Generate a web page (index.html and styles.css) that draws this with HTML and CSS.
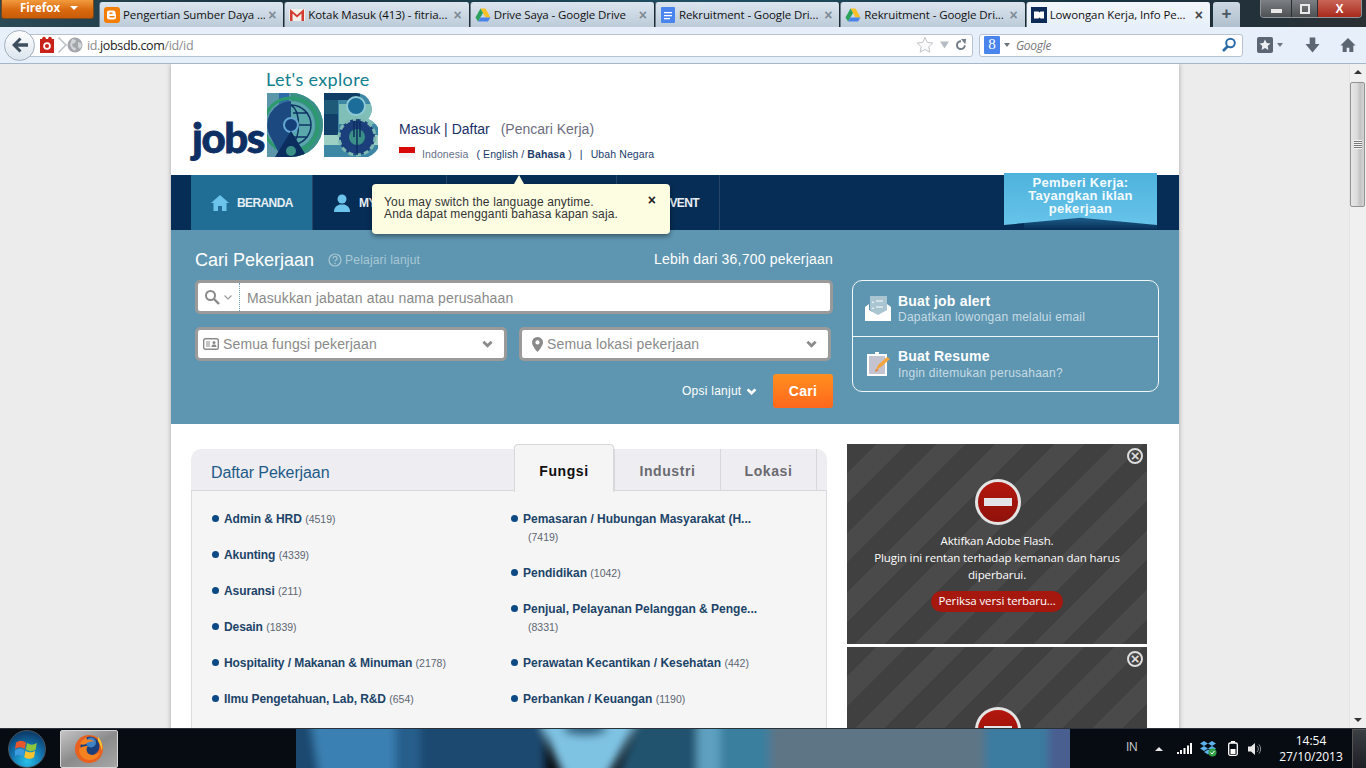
FILE: index.html
```html
<!DOCTYPE html>
<html lang="id">
<head>
  <meta charset="UTF-8" />
  <title>Lowongan Kerja, Info Pekerjaan - JobsDB</title>
  <link rel="stylesheet" href="styles.css">
</head>
<body>
<div class="window">

  <!-- tab strip -->
  <div class="titlebar">
    <div class="ff-button">Firefox <span class="ff-caret"></span></div>
    <div class="tabs">
      <div class="tab">
        <svg class="favicon" viewBox="0 0 16 16"><rect width="16" height="16" rx="3" fill="#f57d00"/><path d="M5 3.5h4A2.5 2.5 0 0 1 11.500 6v1l.5.5V10a2.500 2.500 0 0 1-2.500 2.500h-4A2.500 2.500 0 0 1 3 10V5.500a2 2 0 0 1 2-2z" fill="#fff"/><rect x="5.500" y="5.500" width="3" height="1.400" fill="#f57d00"/><rect x="5.500" y="9" width="5" height="1.400" fill="#f57d00"/></svg>
        <span class="tab-label">Pengertian Sumber Daya ...</span><span class="tab-x">×</span>
      </div>
      <div class="tab">
        <svg class="favicon" viewBox="0 0 16 16"><rect y="2" width="16" height="12" fill="#f2efe8"/><path d="M1 14V2l7 6 7-6v12h-2.500V6.500L8 10.500 3.500 6.500V14z" fill="#d13b30"/></svg>
        <span class="tab-label">Kotak Masuk (413) - fitria...</span><span class="tab-x">×</span>
      </div>
      <div class="tab">
        <svg class="favicon" viewBox="0 0 16 16"><path d="M5.500 1.500h5l5 9h-5z" fill="#f6c026"/><path d="M5.500 1.500L8 6l-5 8.500-2.500-4z" fill="#2aa25b"/><path d="M3 14.500l2.500-4h10l-2.500 4z" fill="#4a83e8"/></svg>
        <span class="tab-label">Drive Saya - Google Drive</span><span class="tab-x">×</span>
      </div>
      <div class="tab">
        <svg class="favicon" viewBox="0 0 16 16"><rect x="1" width="14" height="16" rx="1" fill="#4a85ee"/><path d="M4 5h8v1.200H4zM4 8h8v1.200H4zM4 11h6v1.200H4z" fill="#fff"/></svg>
        <span class="tab-label">Rekruitment - Google Dri...</span><span class="tab-x">×</span>
      </div>
      <div class="tab">
        <svg class="favicon" viewBox="0 0 16 16"><path d="M5.500 1.500h5l5 9h-5z" fill="#f6c026"/><path d="M5.500 1.500L8 6l-5 8.500-2.500-4z" fill="#2aa25b"/><path d="M3 14.500l2.500-4h10l-2.500 4z" fill="#4a83e8"/></svg>
        <span class="tab-label">Rekruitment - Google Dri...</span><span class="tab-x">×</span>
      </div>
      <div class="tab tab-active">
        <svg class="favicon" viewBox="0 0 16 16"><rect width="16" height="16" fill="#0c2b58"/><path d="M3 4.500h4.500l1 1 1-1H13v7H9.500l-1-1-1 1H3z" fill="#fff"/></svg>
        <span class="tab-label">Lowongan Kerja, Info Pe...</span><span class="tab-x">×</span>
      </div>
      <div class="tab-new">+</div>
    </div>
    <div class="win-controls">
      <div class="win-btn win-min"><span></span></div>
      <div class="win-btn win-max"><span></span></div>
      <div class="win-btn win-close">X</div>
    </div>
  </div>

  <!-- navigation toolbar -->
  <div class="toolbar">
    <div class="back-btn">
      <svg width="20" height="20" viewBox="0 0 20 20"><path d="M9.500 2.500L2 10l7.500 7.500 2-2-3.700-3.800H18V8.300H7.800l3.700-3.800z" fill="#3f4e5e"/></svg>
    </div>
    <div class="urlbar">
      <svg class="addon" width="16" height="18" viewBox="0 0 16 18"><rect x="1" y="3" width="14" height="14" fill="#c9221b"/><circle cx="5" cy="2.500" r="1.800" fill="#c9221b"/><circle cx="11" cy="2.500" r="1.800" fill="#c9221b"/><circle cx="8" cy="10" r="3.800" fill="#fff"/><circle cx="8" cy="10" r="2" fill="#c9221b"/></svg>
      <span class="url-sep"></span>
      <svg class="globe" width="16" height="16" viewBox="0 0 16 16"><circle cx="8" cy="8" r="7.500" fill="#a3a7ac"/><path d="M5 2l4 1-1 3-3 1 1 3 3 1-1 3-3-2-2-4zM11 5l3 1 1 3-2 3-2-2z" fill="#d3d6d9"/></svg>
      <span class="url"><span class="url-dim">id.</span>jobsdb.com<span class="url-dim">/id/id</span></span>
      <span class="url-tools">
        <svg width="18" height="18" viewBox="0 0 20 20"><path d="M10 1.500l2.600 5.600 6 .7-4.400 4.100 1.200 6L10 15l-5.400 2.900 1.200-6L1.400 7.800l6-.7z" fill="#fbfbfb" stroke="#b9bdc2"/></svg>
        <svg width="9" height="8" viewBox="0 0 10 8"><path d="M0 0h10L5 8z" fill="#b6bcc3"/></svg>
        <svg width="12" height="14" viewBox="0 0 14 14"><path d="M11.500 7.500A4.600 4.600 0 1 1 7 2.600" fill="none" stroke="#717c87" stroke-width="2.300"/><path d="M7 0h6l-1 6z" fill="#717c87"/></svg>
      </span>
    </div>
    <div class="searchbar">
      <span class="g-icon">8</span>
      <span class="g-caret"></span>
      <span class="search-hint">Google</span>
      <svg class="search-go" width="16" height="16" viewBox="0 0 16 16"><circle cx="9.500" cy="6" r="4.300" fill="none" stroke="#2b6ca8" stroke-width="2"/><path d="M6.500 9.500L2 14" stroke="#2b6ca8" stroke-width="2.600"/></svg>
    </div>
    <div class="tool-icons">
      <span class="bookmarks">
        <svg width="16" height="16" viewBox="0 0 16 16"><rect width="16" height="16" rx="2" fill="#5b6672"/><path d="M8 2.500L9.700 6l3.800.5-2.800 2.600.7 3.800L8 11l-3.400 1.900.7-3.800-2.800-2.600L6.300 6z" fill="#eef1f4"/></svg>
        <span class="bm-caret"></span>
      </span>
      <svg class="dl-icon" width="15" height="18" viewBox="0 0 16 18"><path d="M5 1h6v7h4.500L8 17 .5 8H5z" fill="#5b6672"/></svg>
      <svg class="home-icon" width="16" height="18" viewBox="0 0 18 18"><path d="M9 1L.5 9.500H3V17h4.500v-5h3v5H15V9.500h2.500z" fill="#5b6672"/></svg>
    </div>
  </div>

  <div class="viewport">
    <div class="scroll-area">
      <div class="page">

        <div class="site-header">
          <div class="logo">
            <span class="logo-tag">Let's explore</span>
            <span class="logo-jobs">jobs</span>
            <svg class="logo-db" width="111" height="64" viewBox="0 0 111 64" role="img" aria-label="DB">
              <defs>
                <clipPath id="clipD"><path d="M0 0h24a32 32 0 0 1 0 64H0z"/></clipPath>
                <clipPath id="clipB"><path d="M57 0h33a16 16 0 0 1 11 26 20 20 0 0 1-15 38H57z"/></clipPath>
              </defs>
              <g clip-path="url(#clipD)">
                <rect width="56" height="64" fill="#5b97a8"/>
                <rect x="12" width="10" height="26" fill="#2e6ba8"/>
                <rect x="24" width="34" height="64" fill="#3a8f86"/>
                <circle cx="24" cy="32" r="27" fill="none" stroke="#2b9a6c" stroke-width="3"/>
                <circle cx="24" cy="32" r="24" fill="#5aa7ac"/>
                <path d="M24 8A24 24 0 0 0 4 45l10 19h10z" fill="#1c4a80"/>
                <path d="M24 12a20 20 0 0 1 0 40M24 12c10 6 10 34 0 40M24 32h20M26 20h15M26 44h15" fill="none" stroke="#0e3564" stroke-width="1.500"/>
                <circle cx="24" cy="32" r="7" fill="#143f78" stroke="#63a6d0" stroke-width="2"/>
                <path d="M24 38L8 64h32z" fill="#0c2e5e"/>
                <circle cx="24" cy="58" r="5" fill="#3a8f86"/>
              </g>
              <g clip-path="url(#clipB)">
                <rect x="57" width="54" height="64" fill="#3d86a4"/>
                <rect x="72" y="11" width="39" height="20" fill="#7fbfb8"/>
                <rect x="57" width="36" height="7" fill="#0f3d66"/>
                <rect x="57" y="7" width="14" height="14" fill="#1f5a78"/>
                <circle cx="89" cy="13" r="9" fill="#1c6d9a" stroke="#8fc9d6" stroke-width="2"/>
                <rect x="57" y="42" width="54" height="10" fill="#9fd0c4"/>
                <rect x="57" y="21" width="14" height="21" fill="#123f6a"/>
                <circle cx="90" cy="44" r="18" fill="#1a3f7a"/>
                <circle cx="90" cy="44" r="18" fill="none" stroke="#7fb9b2" stroke-width="3" stroke-dasharray="5 3"/>
                <circle cx="90" cy="44" r="8" fill="#3a8f86"/>
                <path d="M87 28v16M90 26v18M93 28v16M90 44v18" stroke="#0c2e5e" stroke-width="1.500"/>
              </g>
            </svg>
          </div>
          <div class="account">
            <div class="account-links"><a>Masuk</a> | <a>Daftar</a> <span class="account-role">(Pencari Kerja)</span></div>
            <div class="locale">
              <span class="flag"></span>
              <span class="locale-country">Indonesia</span>
              <span class="locale-lang">( English / <b>Bahasa</b> )</span>
              <span class="locale-sep">|</span>
              <span class="locale-lang">Ubah Negara</span>
            </div>
          </div>
        </div>

        <div class="nav">
          <div class="nav-item nav-home">
            <svg width="18" height="16" viewBox="0 0 18 16"><path d="M9 0L0 8h2.500v8H7v-5h4v5h4.500V8H18z" fill="#6cc4ec"/></svg>
            BERANDA
          </div>
          <div class="nav-item nav-my">
            <svg width="18" height="18" viewBox="0 0 18 18"><circle cx="9" cy="5" r="4.500" fill="#6cc4ec"/><path d="M1 18c0-5 3-6.500 5.500-7.500h5C14 11.500 17 13 17 18z" fill="#6cc4ec"/></svg>
            MY JOBSDB
          </div>
          <div class="nav-item nav-career">KARIR</div>
          <div class="nav-item nav-event">EVENT</div>

          <div class="banner-shadow"></div>
          <div class="employer-banner">Pemberi Kerja:<br>Tayangkan iklan<br>pekerjaan</div>

          <div class="lang-tip">
            You may switch the language anytime.<br>
            Anda dapat mengganti bahasa kapan saja.
            <span class="lang-tip-x">×</span>
          </div>
        </div>

        <div class="search-panel">
          <div class="search-main">
            <div class="search-head">
              <h2>Cari Pekerjaan</h2>
              <span class="learn-more">
                <svg width="14" height="14" viewBox="0 0 14 14"><circle cx="7" cy="7" r="6" fill="none" stroke="#a9c8d6" stroke-width="1.200"/><path d="M5 5.500a2 2 0 1 1 2.800 1.800c-.6.3-.8.700-.8 1.300" fill="none" stroke="#a9c8d6" stroke-width="1.200"/><circle cx="7" cy="10.500" r=".8" fill="#a9c8d6"/></svg>
                Pelajari lanjut
              </span>
              <span class="job-total">Lebih dari 36,700 pekerjaan</span>
            </div>
            <div class="field field-keyword">
              <span class="kw-type">
                <svg width="16" height="16" viewBox="0 0 16 16"><circle cx="6.500" cy="6.500" r="4.500" fill="none" stroke="#8a8a8a" stroke-width="2"/><path d="M10 10l5 5" stroke="#8a8a8a" stroke-width="2.400"/></svg>
                <svg width="8" height="5" viewBox="0 0 8 5"><path d="M.5.500L4 4 7.500.5" fill="none" stroke="#999" stroke-width="1.200"/></svg>
              </span>
              <span class="placeholder">Masukkan jabatan atau nama perusahaan</span>
            </div>
            <div class="field-row">
              <div class="field field-select">
                <svg width="16" height="12" viewBox="0 0 16 12"><rect x=".7" y=".7" width="14.600" height="10.600" rx="1.500" fill="none" stroke="#8a8a8a" stroke-width="1.400"/><path d="M3 3.500h4v1H3zM3 5.500h4v1H3zM3 7.500h4v1H3z" fill="#8a8a8a"/><circle cx="11" cy="4.500" r="1.500" fill="#8a8a8a"/><path d="M8.500 9c0-2 1-2.500 2.500-2.500s2.500.5 2.500 2.500z" fill="#8a8a8a"/></svg>
                <span class="placeholder">Semua fungsi pekerjaan</span>
                <svg class="select-arrow" width="11" height="8" viewBox="0 0 12 8"><path d="M1.500 1.500L6 6l4.500-4.500" fill="none" stroke="#8a8a8a" stroke-width="3"/></svg>
              </div>
              <div class="field field-select">
                <svg class="pin" width="11" height="15" viewBox="0 0 11 15"><path d="M5.500 0A5.400 5.400 0 0 0 0 5.400C0 9 5.500 15 5.500 15S11 9 11 5.400A5.400 5.400 0 0 0 5.500 0zm0 7.500a2.100 2.100 0 1 1 0-4.200 2.100 2.100 0 0 1 0 4.200z" fill="#8a8a8a"/></svg>
                <span class="placeholder">Semua lokasi pekerjaan</span>
                <svg class="select-arrow" width="11" height="8" viewBox="0 0 12 8"><path d="M1.500 1.500L6 6l4.500-4.500" fill="none" stroke="#8a8a8a" stroke-width="3"/></svg>
              </div>
            </div>
            <div class="search-actions">
              <span class="more-opts">Opsi lanjut
                <svg width="11" height="7" viewBox="0 0 12 8"><path d="M1.500 1.500L6 6l4.500-4.500" fill="none" stroke="#fff" stroke-width="3"/></svg>
              </span>
              <button class="cari-btn">Cari</button>
            </div>
          </div>

          <div class="quick-box">
            <div class="quick-row">
              <svg width="26" height="25" viewBox="0 0 26 25"><path d="M5 0h17v14l-9 6-8-6z" fill="#a9c5d2"/><path d="M8 5l1 2H7zM8 11l1 2H7z" fill="#fff"/><path d="M11 5h7M11 11h7" stroke="#fff"/><path d="M0 11l4-3v6l9 5 9-5V8l4 3v14H0z" fill="#fff"/></svg>
              <div>
                <div class="quick-title">Buat job alert</div>
                <div class="quick-sub">Dapatkan lowongan melalui email</div>
              </div>
            </div>
            <div class="quick-row">
              <svg class="resume-icon" width="24" height="24" viewBox="0 0 24 24"><rect x="1" y="3" width="18" height="20" fill="#c3c4d0" stroke="#fff" stroke-width="2"/><rect x="8" width="4" height="4" fill="#fff"/><path d="M9 18l2-5 9-8 3 2-9 8z" fill="#f4a43e"/><path d="M8 20l1-3 3 1z" fill="#e8772a"/></svg>
              <div>
                <div class="quick-title">Buat Resume</div>
                <div class="quick-sub">Ingin ditemukan perusahaan?</div>
              </div>
            </div>
          </div>
        </div>

        <div class="lower">
          <div class="jobs-card">
            <div class="jobs-head">
              <h3>Daftar Pekerjaan</h3>
              <div class="jobs-tabs">
                <div class="jobs-tab jobs-tab-on">Fungsi</div>
                <div class="jobs-tab jobs-tab-mid">Industri</div>
                <div class="jobs-tab jobs-tab-end">Lokasi</div>
              </div>
            </div>
            <div class="jobs-body">
              <ul class="job-col">
                <li><a>Admin &amp; HRD</a> <small>(4519)</small></li>
                <li><a>Akunting</a> <small>(4339)</small></li>
                <li><a>Asuransi</a> <small>(211)</small></li>
                <li><a>Desain</a> <small>(1839)</small></li>
                <li><a>Hospitality / Makanan &amp; Minuman</a> <small>(2178)</small></li>
                <li><a>Ilmu Pengetahuan, Lab, R&amp;D</a> <small>(654)</small></li>
              </ul>
              <ul class="job-col job-col-2">
                <li class="two-line"><a>Pemasaran / Hubungan Masyarakat (H...</a><br><small>(7419)</small></li>
                <li><a>Pendidikan</a> <small>(1042)</small></li>
                <li class="two-line"><a>Penjual, Pelayanan Pelanggan &amp; Penge...</a><br><small>(8331)</small></li>
                <li><a>Perawatan Kecantikan / Kesehatan</a> <small>(442)</small></li>
                <li><a>Perbankan / Keuangan</a> <small>(1190)</small></li>
              </ul>
            </div>
          </div>

          <div class="ads">
            <div class="flash-box">
              <span class="flash-x">×</span>
              <span class="stop-icon"><span></span></span>
              <p>Aktifkan Adobe Flash.<br>Plugin ini rentan terhadap kemanan dan harus diperbarui.</p>
              <span class="flash-btn">Periksa versi terbaru...</span>
            </div>
            <div class="flash-box flash-box-2">
              <span class="flash-x">×</span>
              <span class="stop-icon"><span></span></span>
            </div>
          </div>
        </div>

      </div>
    </div>
    <div class="scrollbar">
      <div class="sb-up"></div>
      <div class="sb-thumb"><span class="sb-grip"></span></div>
      <div class="sb-track"></div>
      <div class="sb-down"></div>
    </div>
  </div>

  <!-- windows taskbar -->
  <div class="taskbar">
    <svg class="wallpaper" width="774" height="40" viewBox="296 0 774 40">
      <defs><filter id="soft"><feGaussianBlur stdDeviation="4"/></filter></defs>
      <g filter="url(#soft)">
        <rect x="270" y="-12" width="135" height="64" fill="#3a80b2"/>
        <path d="M270 -12h40l10 64h-50z" fill="#1c4a70"/>
        <rect x="400" y="-12" width="145" height="64" fill="#1b4a70"/>
        <rect x="395" y="-12" width="25" height="64" fill="#265f8c"/>
        <path d="M538 -12h102l-36 64h-38z" fill="#7fc3e3"/>
        <ellipse cx="585" cy="0" rx="22" ry="7" fill="#2a5f80"/>
        <path d="M640 -12h60v64h-85z" fill="#24536e"/>
        <rect x="697" y="-12" width="24" height="64" fill="#5fa0c0"/>
        <rect x="720" y="-12" width="52" height="64" fill="#3b7f9f"/>
        <rect x="770" y="-12" width="216" height="64" fill="#5d7585"/>
        <rect x="985" y="-12" width="64" height="64" fill="#3a7ca0"/>
        <rect x="1048" y="-12" width="40" height="64" fill="#4a5f90"/>
      </g>
    </svg>
    <div class="start-orb">
      <svg width="24" height="22" viewBox="0 0 22 20"><path d="M1 4c3-2 6-2 9 0L9 10c-3-2-6-2-9 0z" fill="#e8572c"/><path d="M11 4.500c3 2 6 2 9 0l-1 6c-3 2-6 2-9 0z" fill="#8cc63f"/><path d="M0 11c3-2 6-2 8.500 0l-1 6c-3-2-6-2-8.500 0z" fill="#3d9be0"/><path d="M9.500 11.500c3 2 6 2 9 0l-1 6c-3 2-6 2-9 0z" fill="#f9c22e"/></svg>
    </div>
    <div class="task-btn">
      <svg width="30" height="30" viewBox="0 0 30 30"><circle cx="15" cy="15" r="14" fill="#e8611f"/><circle cx="16" cy="12" r="9.500" fill="#1b3f7a"/><circle cx="17" cy="8.500" r="5" fill="#3f83c6"/><path d="M5 15c0 8 6 11 11 11 5 0 9-3 10-8-3 3-8 4-11 2-3-2-3-6-1-8-3 0-6 0-9 3z" fill="#f58220"/><path d="M6 10c1-3 4-6 7-7-1 2 0 3 1 3 2-1 5 0 6 2-3-1-7 0-8 2-2 1-4 1-6 0z" fill="#f58220"/><path d="M24 3c4 4 5 9 4 14-1-4-2-7-4-10z" fill="#f9c22e"/></svg>
    </div>
    <div class="tray">
      <span class="tray-lang">IN</span>
      <span class="tray-up"></span>
      <svg class="tray-signal" width="15" height="11" viewBox="0 0 15 11"><path d="M0 9h2v2H0zM3 7h2v4H3zM6.500 5h2v6h-2zM10 2.500h2V11h-2zM13 0h2v11h-2z" fill="#fff"/></svg>
      <svg class="tray-dropbox" width="17" height="16" viewBox="0 0 17 16"><path d="M4 0l4 2.500L4 5 0 2.500zM12 0l4 2.500L12 5 8 2.500zM4 5l4 2.500L4 10 0 7.500zM12 5l4 2.500L12 10 8 7.500zM8 8.500l4 2.500-4 2.500L4 11z" fill="#5cb2e8"/><circle cx="12.500" cy="11.500" r="4" fill="#2f9e44"/><path d="M10.500 11.500l1.500 1.500 2.500-3" stroke="#fff" fill="none"/></svg>
      <svg class="tray-battery" width="10" height="15" viewBox="0 0 10 15"><rect x=".7" y="2" width="8.600" height="12.300" rx="1.500" fill="none" stroke="#fff" stroke-width="1.300"/><rect x="3" width="4" height="2" fill="#fff"/><rect x="2.500" y="8" width="5" height="5" fill="#fff"/></svg>
      <svg class="tray-sound" width="14" height="14" viewBox="0 0 14 14"><path d="M0 4.500h3L7 1v12L3 9.500H0z" fill="#e8e8e8"/><path d="M9 4a4 4 0 0 1 0 6M11 2.500a7 7 0 0 1 0 9" fill="none" stroke="#8a8f95"/></svg>
      <div class="clock">14:54<br>27/10/2013</div>
      <div class="show-desktop"></div>
    </div>
  </div>

</div>
</body>
</html>
```

FILE: styles.css
```css
* {
  box-sizing: border-box;
}

html, body {
  margin: 0;
  height: 100%;
  overflow: hidden;
}

body {
  font-family: "Liberation Sans", Arial, sans-serif;
}

.window {
  width: 1366px;
  height: 768px;
  display: flex;
  flex-direction: column;
  overflow: hidden;
}

/* ---------- tab strip ---------- */
.titlebar {
  height: 27px;
  flex: none;
  display: flex;
  align-items: flex-start;
  background: linear-gradient(90deg, #2a4a55 0, #17303c 300px, #1f4f62 700px, #173240 1100px, #2b3034 1366px);
}

.ff-button {
  width: 93px;
  height: 19px;
  margin-left: 1px;
  padding-left: 3px;
  flex: none;
  background: linear-gradient(#f29a3d, #d9690f 55%, #c85c08);
  border: 1px solid #7a4a1c;
  border-top: 0;
  border-radius: 0 0 3px 3px;
  color: #fff;
  font: bold 11.5px "Open Sans", sans-serif;
  text-align: center;
  line-height: 16px;
}

.ff-caret {
  display: inline-block;
  width: 0;
  height: 0;
  margin-left: 7px;
  border-left: 4px solid transparent;
  border-right: 4px solid transparent;
  border-top: 4px solid #fff;
  vertical-align: 2px;
}

.tabs {
  display: flex;
  margin-left: 5px;
  padding-top: 2px;
}

.tab {
  width: 185.33px;
  height: 25px;
  display: flex;
  align-items: center;
  gap: 3px;
  padding: 0 7px 0 4px;
  background: linear-gradient(#dbe5ef, #bccbd9);
  border-right: 1px solid #1b2a33;
  border-left: 1px solid #6d7d8a;
  border-radius: 3px 3px 0 0;
  font: 11.5px "Open Sans", sans-serif;
  color: #111;
  white-space: nowrap;
}

.tab-active {
  background: linear-gradient(#f3f7fc, #e6eff9);
}

.favicon {
  width: 16px;
  height: 16px;
  flex: none;
}

.tab-label {
  flex: 1;
  min-width: 0;
  overflow: hidden;
  letter-spacing: -.1px;
}

.tab-x {
  color: #7f8b96;
  font: bold 14px "Liberation Sans", sans-serif;
}

.tab-active .tab-x {
  color: #444;
}

.tab-new {
  width: 27px;
  height: 25px;
  margin-left: 2px;
  background: linear-gradient(#ccd8e3, #b1c0ce);
  border-radius: 3px 3px 0 0;
  color: #4a5662;
  font: bold 17px/24px "Liberation Sans", sans-serif;
  text-align: center;
}

.win-controls {
  margin-left: auto;
  margin-right: 4px;
  display: flex;
  height: 18px;
  border: 1px solid #8e9499;
  border-top: 0;
  border-radius: 0 0 4px 4px;
  overflow: hidden;
}

.win-btn {
  height: 100%;
  display: flex;
  align-items: center;
  justify-content: center;
  background: linear-gradient(#7c8084, #4d5154);
}

.win-min {
  width: 30px;
}

.win-min span {
  width: 11px;
  height: 4px;
  margin-top: 4px;
  background: #e8e8e8;
}

.win-max {
  width: 27px;
  border-left: 1px solid #2b2e30;
  border-right: 1px solid #2b2e30;
}

.win-max span {
  width: 10px;
  height: 10px;
  border: 2px solid #e8e8e8;
}

.win-close {
  width: 43px;
  background: linear-gradient(#c96558, #a82a1b);
  color: #fff;
  font: bold 12px "Liberation Sans", sans-serif;
}

/* ---------- nav toolbar ---------- */
.toolbar {
  height: 37px;
  flex: none;
  display: flex;
  align-items: center;
  background: #e6effa;
  border-bottom: 1px solid #a8b7c8;
}

.back-btn {
  width: 31px;
  height: 31px;
  margin-left: 4px;
  flex: none;
  display: flex;
  align-items: center;
  justify-content: center;
  background: linear-gradient(#fff, #dbe4ee);
  border: 1px solid #a4afbb;
  border-radius: 50%;
  z-index: 1;
}

.urlbar {
  width: 948px;
  height: 23px;
  margin-left: -10px;
  padding: 0 5px 0 13px;
  display: flex;
  align-items: center;
  background: #fff;
  border: 1px solid #b7c3d0;
  border-radius: 0 3px 3px 0;
}

.url-sep {
  width: 8px;
  height: 8px;
  margin: 0 4px 0 0;
  border-top: 1px solid #b8bfc6;
  border-right: 1px solid #b8bfc6;
  transform: rotate(45deg) scale(1.4);
}

.url {
  margin-left: 4px;
  font: 12.5px "Open Sans", sans-serif;
  letter-spacing: -.35px;
  color: #222;
}

.url-dim {
  color: #8c8c8c;
}

.url-tools {
  margin-left: auto;
  display: flex;
  align-items: center;
  gap: 6px;
}

.searchbar {
  width: 264px;
  height: 23px;
  margin-left: 6px;
  padding: 0 5px 0 4px;
  display: flex;
  align-items: center;
  background: #fff;
  border: 1px solid #b7c3d0;
  border-radius: 3px;
}

.g-icon {
  width: 16px;
  height: 18px;
  background: #4a85ee;
  color: #fff;
  font: 15px/17px "Liberation Serif", serif;
  text-align: center;
  border-radius: 1px;
}

.g-caret, .bm-caret {
  width: 0;
  height: 0;
  border-left: 3px solid transparent;
  border-right: 3px solid transparent;
  border-top: 4px solid #6d7780;
}

.g-caret {
  margin-left: 4px;
}

.search-hint {
  margin-left: 6px;
  font: italic 12px "Open Sans", sans-serif;
  letter-spacing: -.3px;
  color: #777;
}

.search-go {
  margin-left: auto;
}

.tool-icons {
  flex: 1;
  display: flex;
  align-items: center;
  padding-left: 14px;
}

.bookmarks {
  display: flex;
  align-items: center;
  gap: 4px;
}

.dl-icon {
  margin-left: 22px;
}

.home-icon {
  margin-left: 20px;
}

/* ---------- page ---------- */
.viewport {
  flex: 1;
  min-height: 0;
  display: flex;
  background: #ececec;
}

.scroll-area {
  flex: 1;
  min-width: 0;
  padding-left: 171px;
  overflow: hidden;
}

.page {
  width: 1008px;
  background: #fff;
  box-shadow: 0 0 5px rgba(0, 0, 0, .3);
}

.site-header {
  height: 111px;
  display: flex;
  padding-left: 20px;
}

.logo {
  width: 208px;
  position: relative;
  flex: none;
}

.logo-tag {
  position: absolute;
  left: 75px;
  top: 4px;
  font: 400 18px Lato, sans-serif;
  letter-spacing: .35px;
  color: #12808f;
  white-space: nowrap;
}

.logo-jobs {
  position: absolute;
  left: 1px;
  top: 48px;
  font: 900 42px Lato, sans-serif;
  letter-spacing: -1.5px;
  color: #0e2f63;
  -webkit-text-stroke: .8px #0e2f63;
}

.logo-db {
  position: absolute;
  left: 76px;
  top: 29px;
}

.account {
  padding-top: 57px;
}

.account-links {
  font-size: 14px;
  color: #1b2f66;
}

.account-role {
  margin-left: 7px;
  color: #6d6d80;
}

.locale {
  display: flex;
  align-items: center;
  margin-top: 10px;
  font-size: 10.5px;
  letter-spacing: .1px;
  color: #1b3c6b;
  white-space: nowrap;
}

.flag {
  width: 16px;
  height: 11px;
  margin-right: 7px;
  margin-bottom: 3px;
  background: linear-gradient(#d80a0a 50%, #f4f4f4 50%);
}

.locale-country {
  color: #66708a;
  margin-right: 8px;
}

.locale-sep {
  margin: 0 8px;
}

.nav {
  height: 55px;
  display: flex;
  padding-left: 20px;
  background: #062d55;
  position: relative;
  font-size: 12px;
  font-weight: bold;
  letter-spacing: -.6px;
  color: #e6eef4;
}

.nav-item {
  display: flex;
  align-items: center;
  gap: 8px;
  border-right: 1px solid #24466b;
}

.nav-home {
  width: 122px;
  padding-left: 20px;
  background: #206e95;
}

.nav-my {
  width: 134px;
  padding-left: 20px;
}

.nav-career {
  width: 170px;
  padding-left: 20px;
}

.nav-event {
  width: 103px;
  padding-left: 45px;
}

.banner-shadow {
  position: absolute;
  left: 853px;
  top: 42px;
  width: 133px;
  height: 13px;
  background: linear-gradient(#1f618d, #062d55);
}

.employer-banner {
  position: absolute;
  left: 833px;
  top: -2px;
  width: 153px;
  height: 52px;
  padding-top: 3px;
  background: linear-gradient(#4eb3dc, #67c3ea);
  clip-path: polygon(0 0, 100% 0, 100% 100%, 50% 86%, 0 100%);
  color: #f4fbff;
  font-size: 13px;
  line-height: 13px;
  letter-spacing: .3px;
  text-align: center;
}

.lang-tip {
  position: absolute;
  left: 201px;
  top: 9px;
  width: 298px;
  height: 50px;
  padding: 12px;
  background: #fdfde2;
  border-radius: 4px;
  box-shadow: 0 2px 5px rgba(0, 0, 0, .45);
  font-size: 12px;
  font-weight: normal;
  line-height: 12px;
  letter-spacing: .15px;
  color: #333;
  z-index: 2;
}

.lang-tip::before {
  content: "";
  position: absolute;
  left: 142px;
  top: -9px;
  border-left: 5px solid transparent;
  border-right: 5px solid transparent;
  border-bottom: 9px solid #fdfde2;
}

.lang-tip-x {
  position: absolute;
  right: 14px;
  top: 8px;
  font: bold 14px "Liberation Sans", sans-serif;
  color: #222;
}

/* search block */
.search-panel {
  height: 194px;
  padding: 20px 20px 0 24px;
  display: flex;
  background: #5e96b1;
}

.search-main {
  width: 638px;
  flex: none;
}

.search-head {
  height: 30px;
  display: flex;
  align-items: flex-start;
  color: #fff;
}

.search-head h2 {
  margin: 0;
  font-size: 18px;
  font-weight: normal;
  line-height: 20px;
}

.learn-more {
  margin-left: 14px;
  display: flex;
  align-items: center;
  gap: 3px;
  font-size: 12px;
  line-height: 20px;
  letter-spacing: .2px;
  color: #a9c8d6;
}

.job-total {
  margin-left: auto;
  font-size: 14px;
  letter-spacing: .2px;
  line-height: 18px;
}

.field {
  display: flex;
  align-items: center;
  background: #fff;
  border: 3px solid #9a9a9a;
  border-radius: 5px;
}

.field-keyword {
  height: 34px;
}

.kw-type {
  width: 42px;
  height: 100%;
  padding-left: 6px;
  display: flex;
  align-items: center;
  gap: 4px;
  border-right: 1px dotted #6d9db5;
}

.placeholder {
  margin-left: 7px;
  padding-top: 1px;
  font-size: 14px;
  letter-spacing: .13px;
  color: #8a8a8a;
}

.field-row {
  display: flex;
  gap: 12px;
  margin-top: 13px;
  width: 636px;
}

.field-select {
  width: 312px;
  height: 34px;
  padding-left: 5px;
}

.field-select .placeholder {
  margin-left: 4px;
  padding-top: 0;
}

.pin {
  margin-left: 5px;
}

.select-arrow {
  margin-left: auto;
  margin-right: 11px;
}

.search-actions {
  display: flex;
  justify-content: flex-end;
  align-items: center;
  gap: 16px;
  margin-top: 13px;
}

.more-opts {
  font-size: 12px;
  letter-spacing: .25px;
  color: #fff;
}

.more-opts svg {
  margin-left: 1px;
}

.cari-btn {
  width: 60px;
  height: 34px;
  padding: 0;
  border: 0;
  border-radius: 3px;
  background: linear-gradient(#ff8f20, #ff671c);
  color: #fff;
  font-family: inherit;
  font-size: 14px;
  font-weight: bold;
  letter-spacing: .3px;
}

.quick-box {
  width: 307px;
  height: 112px;
  margin-top: 30px;
  margin-left: 19px;
  flex: none;
  border: 1px solid #f2f7f9;
  border-radius: 10px;
}

.quick-row {
  height: 55px;
  display: flex;
  align-items: center;
  gap: 7px;
  padding-left: 12px;
}

.quick-row + .quick-row {
  padding-bottom: 1px;
  border-top: 1px solid #f2f7f9;
}

.quick-row + .quick-row .quick-sub {
  margin-top: 2px;
}

.resume-icon {
  margin-left: 2px;
}

.quick-title {
  font-size: 14px;
  font-weight: bold;
  letter-spacing: .2px;
  color: #fff;
}

.quick-sub {
  margin-top: 1px;
  font-size: 12px;
  letter-spacing: .25px;
  color: #c6dbe5;
}

/* job lists */
.lower {
  padding: 20px 32px 0 20px;
  display: flex;
  justify-content: space-between;
}

.jobs-card {
  width: 636px;
  margin-top: 5px;
}

.jobs-head {
  height: 42px;
  display: flex;
  justify-content: space-between;
  background: #eeeef2;
  border-bottom: 1px solid #d8d8dc;
  border-radius: 10px 10px 0 0;
}

.jobs-head h3 {
  margin: 0;
  padding: 15px 0 0 20px;
  font-size: 16px;
  font-weight: normal;
  letter-spacing: -.1px;
  color: #1e5b88;
}

.jobs-tabs {
  display: flex;
  height: 47px;
  margin-top: -5px;
  margin-right: 10px;
}

.jobs-tab {
  margin-top: 5px;
  height: 41px;
  text-align: center;
  line-height: 44px;
  border-left: 1px solid #d8d8dc;
  font-size: 14px;
  font-weight: bold;
  letter-spacing: .6px;
  color: #6a6a70;
}

.jobs-tab-mid {
  width: 106px;
}

.jobs-tab-end {
  width: 97px;
  border-right: 1px solid #d8d8dc;
}

.jobs-tab-on {
  width: 100px;
  height: 48px;
  margin-top: 0;
  line-height: 52px;
  background: #f5f5f6;
  border: 1px solid #d8d8dc;
  border-bottom: 0;
  border-radius: 4px 4px 0 0;
  color: #111;
  position: relative;
}

.jobs-body {
  display: flex;
  height: 300px;
  background: #f5f5f6;
  border-left: 1px solid #dcdce0;
  border-right: 1px solid #dcdce0;
}

.job-col {
  list-style: none;
  width: 301px;
  margin: 0;
  padding: 19px 0 0 32px;
  flex: none;
}

.job-col-2 {
  width: 300px;
  padding-left: 30px;
}

.job-col li {
  position: relative;
  height: 36px;
  font-size: 12px;
  line-height: 18px;
  white-space: nowrap;
}

.job-col li.two-line {
  height: 54px;
}

.job-col li::before {
  content: "";
  position: absolute;
  left: -12px;
  top: 5px;
  width: 7px;
  height: 7px;
  border-radius: 50%;
  background: #0d4a85;
}

.job-col a {
  font-weight: bold;
  letter-spacing: -.08px;
  color: #1d4468;
}

.job-col-2 a {
  letter-spacing: 0;
}

.job-col small {
  font-size: 10.5px;
  color: #5c6670;
}

.two-line small {
  margin-left: 5px;
}

/* flash placeholders */
.ads {
  width: 300px;
  flex: none;
}

.flash-box {
  position: relative;
  height: 200px;
  padding-top: 35px;
  display: flex;
  flex-direction: column;
  align-items: center;
  background: repeating-linear-gradient(135deg, #404040 0, #404040 21px, #4a4a4a 21px, #4a4a4a 42px);
  color: #fff;
  text-align: center;
  font: 11.5px "Open Sans", sans-serif;
  letter-spacing: -.1px;
}

.flash-box-2 {
  margin-top: 3px;
  padding-top: 60px;
}

.flash-x {
  position: absolute;
  right: 4px;
  top: 4px;
  width: 16px;
  height: 16px;
  border: 2px solid #ddd;
  border-radius: 50%;
  font: bold 15px/12px "Liberation Sans", sans-serif;
  color: #ddd;
}

.stop-icon {
  width: 46px;
  height: 46px;
  margin-left: 2px;
  flex: none;
  display: flex;
  align-items: center;
  justify-content: center;
  border: 3px solid #e4e4e4;
  border-radius: 50%;
  background: linear-gradient(#b3170d, #8f120b);
}

.stop-icon span {
  width: 28px;
  height: 8px;
  background: #e2e4e6;
}

.flash-box p {
  margin: 7px 0 0;
  width: 270px;
  line-height: 17px;
}

.flash-btn {
  margin-top: 8px;
  padding: 0 7px;
  height: 21px;
  line-height: 20px;
  background: #a6180e;
  border-radius: 11px;
}

/* scrollbar */
.scrollbar {
  width: 17px;
  flex: none;
  display: flex;
  flex-direction: column;
  background: #f0f0f0;
  border-left: 1px solid #e4e4e4;
}

.sb-up, .sb-down {
  flex: none;
  position: relative;
}

.sb-up {
  height: 18px;
}

.sb-down {
  height: 16px;
}

.sb-up::after, .sb-down::after {
  content: "";
  position: absolute;
  left: 4px;
  top: 6px;
  border-left: 4px solid transparent;
  border-right: 4px solid transparent;
}

.sb-up::after {
  border-bottom: 4px solid #333;
}

.sb-down::after {
  border-top: 4px solid #333;
}

.sb-thumb {
  height: 125px;
  margin-right: 1px;
  flex: none;
  display: flex;
  align-items: center;
  justify-content: center;
  background: linear-gradient(90deg, #e6e6e6, #dcdcdc 45%, #c2c2c2 70%, #d4d4d4);
  border: 1px solid #929292;
  border-radius: 2px;
}

.sb-grip {
  width: 8px;
  height: 9px;
  background: repeating-linear-gradient(#f6f6f6 0, #f6f6f6 1px, #777 1px, #777 2px);
}

.sb-track {
  flex: 1;
}

/* ---------- taskbar ---------- */
.taskbar {
  height: 40px;
  flex: none;
  display: flex;
  align-items: center;
  background: #070c12;
  border-top: 1px solid #2b3138;
  position: relative;
}

/* desktop picture showing through the glass */
.wallpaper {
  position: absolute;
  left: 296px;
  top: 0;
}

.start-orb {
  width: 38px;
  height: 38px;
  margin-left: 8px;
  flex: none;
  display: flex;
  align-items: center;
  justify-content: center;
  border-radius: 50%;
  border: 1px solid #46525c;
  background: radial-gradient(circle at 50% 85%, #27c1ea, #1374ad 45%, #0c3f6e 80%);
}

.task-btn {
  width: 58px;
  height: 38px;
  margin-left: 14px;
  flex: none;
  display: flex;
  align-items: center;
  justify-content: center;
  background: linear-gradient(150deg, #c4c4c4, #8b8b8b 50%, #a6a6a6);
  border: 1px solid #d7d7d7;
  border-radius: 2px;
}

.tray {
  margin-left: auto;
  height: 100%;
  display: flex;
  align-items: center;
  color: #fff;
  font: 12px "Open Sans", sans-serif;
  position: relative;
}

.tray-lang {
  width: 12px;
  margin-top: -4px;
  letter-spacing: -.5px;
  color: #c9cdd1;
}

.tray-up {
  width: 0;
  height: 0;
  margin-left: 17px;
  border-left: 4px solid transparent;
  border-right: 4px solid transparent;
  border-bottom: 4px solid #e8e8e8;
}

.tray-signal {
  margin-left: 14px;
}

.tray-dropbox {
  margin-left: 8px;
}

.tray-battery {
  margin-left: 11px;
}

.tray-sound {
  margin-left: 10px;
}

.clock {
  width: 82px;
  margin-left: 8px;
  text-align: center;
  line-height: 16px;
}

.show-desktop {
  width: 14px;
  height: 100%;
  background: linear-gradient(#3a3f44, #1d2024);
  border-left: 1px solid #555;
  border-top: 1px solid #555;
}
```
